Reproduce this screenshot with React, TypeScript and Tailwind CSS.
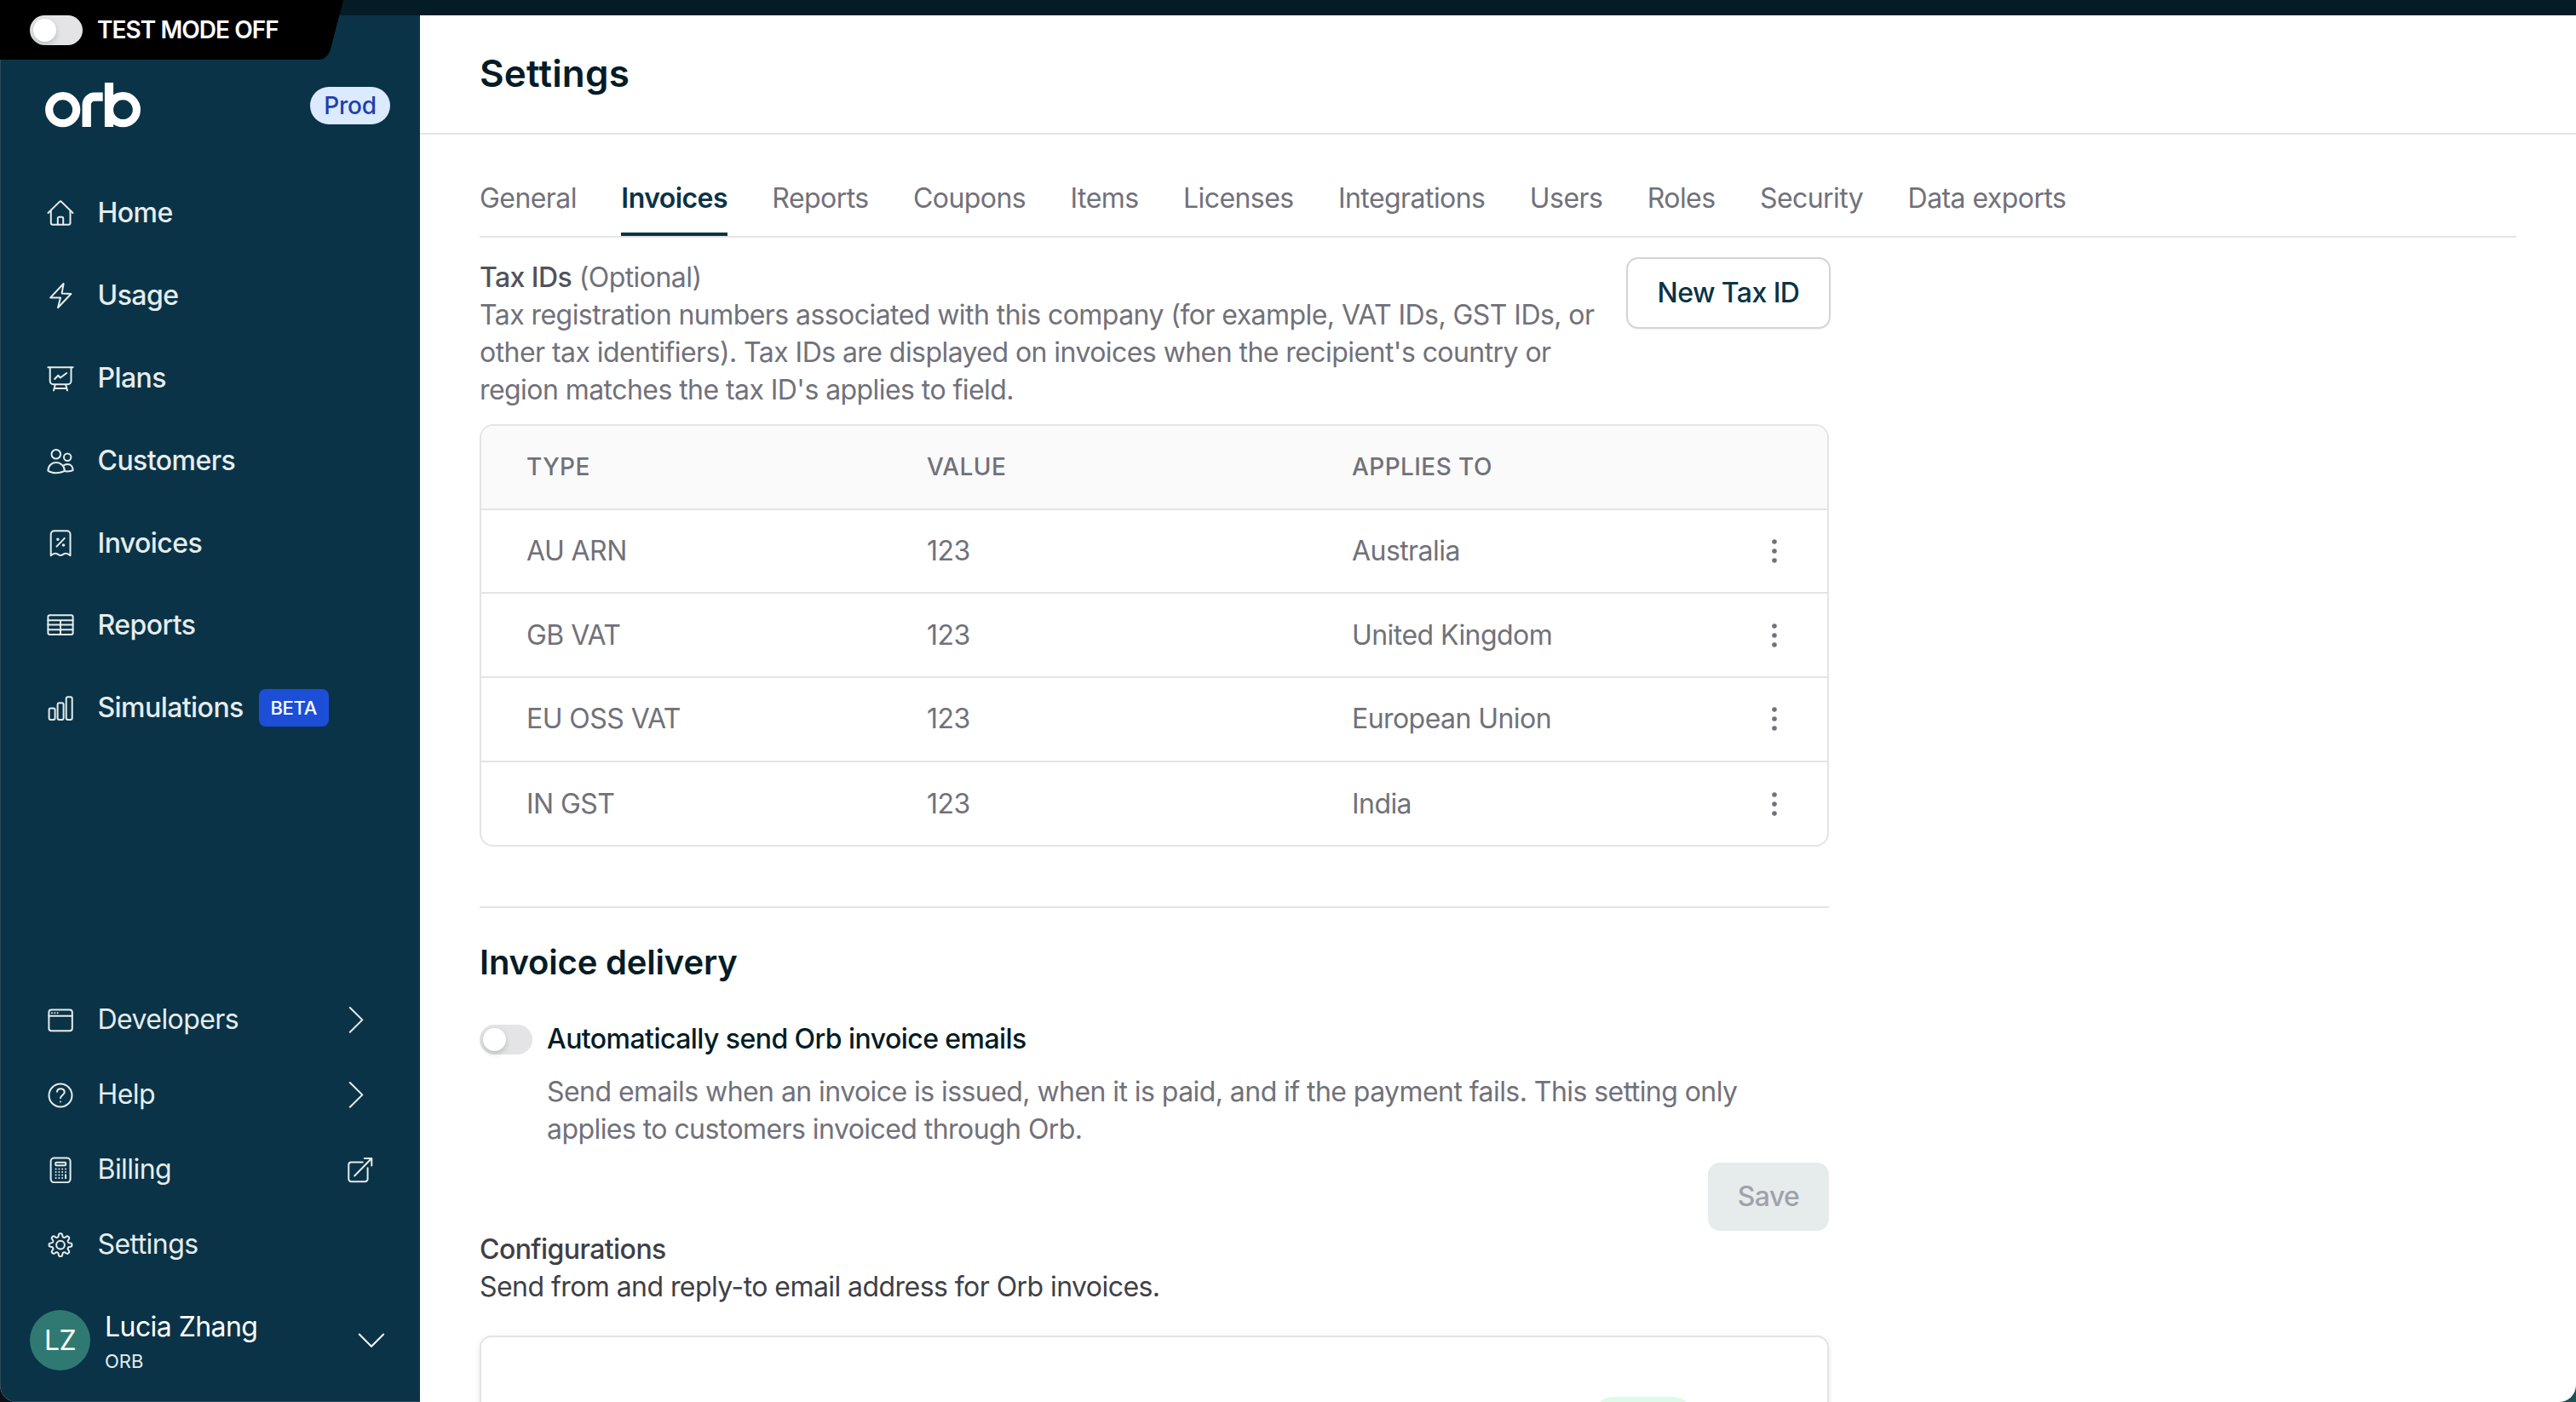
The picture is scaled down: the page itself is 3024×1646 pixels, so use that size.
import React from 'react'
import clsx from 'clsx'

type IconProps = {
  children: React.ReactNode
  className?: string
}

const Icon = ({ children, className }: IconProps) => (
  <svg
    viewBox="0 0 32 32"
    className={clsx("size-8 shrink-0", className)}
    fill="none"
    stroke="currentColor"
    strokeWidth={2}
    strokeLinecap="round"
    strokeLinejoin="round"
  >
    {children}
  </svg>
)

const HomeIcon = () => (
  <Icon>
    <path d="M1.5 16 L14.6 3.1 a2 2 0 0 1 2.8 0 L30.5 16" />
    <path d="M4.8 13.5 V27.8 a2 2 0 0 0 2 2 H25.5 a2 2 0 0 0 2 -2 V13.5" />
    <path d="M12.8 29.5 V22.5 a1.7 1.7 0 0 1 1.7 -1.7 H17.5 a1.7 1.7 0 0 1 1.7 1.7 V29.5" />
  </Icon>
)

const UsageIcon = () => (
  <Icon>
    <path d="M19.6 2 L4.2 18.4 H16 L13 30.3 L28.4 14 L17.6 13.4 Z" />
  </Icon>
)

const PlansIcon = () => (
  <Icon>
    <path d="M1.4 3.3 H30.6" />
    <path d="M3.7 3.5 V19.3 a4 4 0 0 0 4 4 H24.5 a4 4 0 0 0 4 -4 V3.5" />
    <path d="M9.8 23.8 L8 30.4 M22.2 23.8 L24 30.4 M8.8 28 H23.2" />
    <path d="M9.2 17 L13.3 12.8 L15.9 15.5 L23.2 10" />
  </Icon>
)

const CustomersIcon = () => (
  <Icon>
    <circle cx="10.8" cy="8.3" r="5.3" />
    <circle cx="24.2" cy="11.7" r="4.2" />
    <path d="M1.4 27.6 C1.4 22.2 5.6 18 10.9 18 S20.8 22.2 20.8 27.6 C18 29.6 14 30.2 10.9 30.2 S4 29.6 1.4 27.6 Z" />
    <path d="M19 22 C20.5 20.6 22.5 20 24.3 20 C28 20 30.6 23 30.6 27.2 C28.5 28.4 25.5 28.6 21.5 28.3" />
  </Icon>
)

const InvoicesIcon = () => (
  <Icon>
    <path d="M4.7 30.3 V5.2 a4 4 0 0 1 4 -4 H23.5 a4 4 0 0 1 4 4 V30.3 C25.5 28.5 23.5 27.6 21.8 27.8 C19.5 28 18.5 29.9 16.1 29.9 S12.7 28 10.4 27.8 C8.7 27.6 6.7 28.5 4.7 30.3 Z" />
    <path d="M20.8 9.9 L11.5 19.6" />
    <circle cx="12.9" cy="11.3" r="0.8" />
    <circle cx="19.5" cy="18" r="0.8" />
  </Icon>
)

const ReportsIcon = () => (
  <Icon>
    <rect x="1.4" y="4.2" width="29.2" height="22.8" rx="2" />
    <path d="M1.4 10.2 H30.6 M1.4 15.4 H30.6 M1.4 21.2 H30.6 M16 10.2 V27" />
  </Icon>
)

const SimulationsIcon = () => (
  <Icon>
    <rect x="2.6" y="16.6" width="7" height="13.4" rx="2" />
    <rect x="12.6" y="10.3" width="7" height="19.7" rx="2" />
    <rect x="22.7" y="3.2" width="7" height="26.8" rx="2" />
  </Icon>
)

const DevelopersIcon = () => (
  <Icon>
    <rect x="2.4" y="4.5" width="27.4" height="24.8" rx="3" />
    <path d="M2.4 11.7 H29.8" />
    <path d="M6 8.2 h.01 M9.3 8.2 h.01 M12.6 8.2 h.01" />
  </Icon>
)

const HelpIcon = () => (
  <Icon>
    <circle cx="16" cy="17" r="13.5" />
    <path d="M12 12.7 C12.2 10.6 13.9 9.2 16.1 9.2 c2.6 0 4.6 1.6 4.6 4.1 c0 3.5 -4.6 3.4 -4.7 7" />
    <path d="M16 24.4 h.01" />
  </Icon>
)

const BillingIcon = () => (
  <Icon>
    <rect x="4.6" y="2.5" width="23" height="28.8" rx="4" />
    <rect x="10.2" y="7.7" width="12" height="3.6" rx="1" />
    {[15.6, 19, 22.5, 26].map((y) => (
      <path key={y} d={`M10.6 ${y} h.01 M14.4 ${y} h.01 M18.2 ${y} h.01 M22 ${y} h.01`} />
    ))}
    <path d="M22 22.5 V26" />
  </Icon>
)

// eight rounded teeth, sampled round the circle
const gearPoints = Array.from({ length: 160 }, (_, i) => {
  const a = (i / 160) * Math.PI * 2
  const r = 11.5 + 2.05 * Math.tanh(1.8 * Math.cos(a * 8))
  return `${(16 + r * Math.cos(a)).toFixed(2)},${(16.6 + r * Math.sin(a)).toFixed(2)}`
}).join(' ')

const SettingsIcon = () => (
  <Icon>
    <polygon points={gearPoints} />
    <circle cx="16" cy="16.6" r="4.9" />
  </Icon>
)

const ChevronRight = () => (
  <Icon>
    <path d="M3.8 2 L18.3 16.4 L3.8 30.8" />
  </Icon>
)

const ChevronDown = () => (
  <Icon>
    <path d="M1.8 8.5 L16 22.8 L30.2 8.5" />
  </Icon>
)

const ExternalIcon = () => (
  <Icon>
    <path d="M18.8 7.5 H5.3 a3 3 0 0 0 -3 3 V27.2 a3 3 0 0 0 3 3 H21.6 a3 3 0 0 0 3 -3 V14.2" />
    <path d="M9.2 23.5 L29.2 3 M20.8 2.9 H29.3 V11.5" />
  </Icon>
)

const OrbLogo = () => (
  <svg viewBox="0 0 112 53" className="w-[112px] h-[53px]" fill="none" stroke="#fff">
    <circle cx="20.7" cy="31.7" r="16" strokeWidth="9.2" />
    <path d="M48.7 52 V26 A9.3 9.3 0 0 1 58 16.7 H67.7" strokeWidth="10.3" />
    <path d="M75 0 V52" strokeWidth="10.2" />
    <circle cx="91.4" cy="31.7" r="16" strokeWidth="9.2" />
  </svg>
)

const Toggle = () => (
  <span className="flex items-center w-[62px] h-[35px] shrink-0 rounded-full bg-[#e4e4e7] px-1">
    <span className="size-[27px] rounded-full bg-white shadow-[0_3px_6px_rgba(0,35,11,0.2)]" />
  </span>
)

const mainNav = [
  { label: 'Home', icon: <HomeIcon /> },
  { label: 'Usage', icon: <UsageIcon /> },
  { label: 'Plans', icon: <PlansIcon /> },
  { label: 'Customers', icon: <CustomersIcon /> },
  { label: 'Invoices', icon: <InvoicesIcon /> },
  { label: 'Reports', icon: <ReportsIcon /> },
  { label: 'Simulations', icon: <SimulationsIcon />, beta: true },
]

const bottomNav = [
  { label: 'Developers', icon: <DevelopersIcon />, trailing: <ChevronRight /> },
  { label: 'Help', icon: <HelpIcon />, trailing: <ChevronRight /> },
  { label: 'Billing', icon: <BillingIcon />, trailing: <ExternalIcon /> },
  { label: 'Settings', icon: <SettingsIcon /> },
]

const tabs = [
  'General', 'Invoices', 'Reports', 'Coupons', 'Items', 'Licenses',
  'Integrations', 'Users', 'Roles', 'Security', 'Data exports',
]

const taxIds = [
  { type: 'AU ARN', value: '123', appliesTo: 'Australia' },
  { type: 'GB VAT', value: '123', appliesTo: 'United Kingdom' },
  { type: 'EU OSS VAT', value: '123', appliesTo: 'European Union' },
  { type: 'IN GST', value: '123', appliesTo: 'India' },
]

const Sidebar = () => (
  <aside className="flex flex-col w-[493px] shrink-0 bg-[#0a3347] border-l border-b border-[#2b4b5b] text-[#e6ecec]">
    <div className="mt-[79px] h-[53px] pl-[52px] pr-[35px] flex items-center justify-between">
      <OrbLogo />
      <span className="flex items-center justify-center w-[94px] h-11 rounded-full bg-[#dbeafe] text-[#1e40af] text-[28px] font-medium tracking-[-0.3px]">
        Prod
      </span>
    </div>

    <nav className="mt-[52px]">
      {mainNav.map((item) => (
        <a key={item.label} className="flex items-center h-[96.8px] pl-[53.5px] text-[32px] font-medium">
          {item.icon}
          <span className="ml-7">{item.label}</span>
          {item.beta && (
            <span className="ml-[18px] flex items-center justify-center w-[82px] h-11 rounded-lg bg-[#1d4ed8] text-white text-[22px] tracking-[-0.3px]">
              BETA
            </span>
          )}
        </a>
      ))}
    </nav>

    <nav className="mt-auto">
      {bottomNav.map((item) => (
        <a key={item.label} className="flex items-center h-[88px] pl-[53.5px] pr-[54px] text-[32px]">
          {item.icon}
          <span className="ml-7 flex-1">{item.label}</span>
          {item.trailing}
        </a>
      ))}
    </nav>

    <div className="mt-[33px] mb-9 h-[71px] pl-[34px] pr-[41px] flex items-center text-white">
      <span className="flex items-center justify-center size-[71px] rounded-full bg-[#2f7972] text-[32px]">
        LZ
      </span>
      <div className="ml-[17px] pt-1 flex-1 flex flex-col">
        <span className="text-[32px] leading-[44px]">Lucia Zhang</span>
        <span className="text-[22px] leading-9 tracking-normal text-[#e6ecec]">ORB</span>
      </div>
      <ChevronDown />
    </div>
  </aside>
)

const TaxIdTable = () => (
  <div className="w-[1584px] h-[496px] border-2 border-[#e4e4e4] rounded-[16px] overflow-hidden text-[32px]">
    <div className="grid grid-cols-[470px_499px_1fr] items-center h-[98.7px] pl-[53px] bg-[#fafafa] border-b-2 border-[#e4e4e4] text-[28px] font-medium tracking-[0.42px]">
      <span>TYPE</span>
      <span>VALUE</span>
      <span>APPLIES TO</span>
    </div>
    {taxIds.map((row) => (
      <div
        key={row.type}
        className="grid grid-cols-[470px_499px_1fr_auto] items-center h-[98.7px] pl-[53px] pr-[46px] border-b-2 border-[#e4e4e4] last:border-b-0"
      >
        <span>{row.type}</span>
        <span>{row.value}</span>
        <span>{row.appliesTo}</span>
        <svg viewBox="0 0 32 32" className="size-8" fill="currentColor">
          <circle cx="16" cy="5" r="2.8" />
          <circle cx="16" cy="16" r="2.8" />
          <circle cx="16" cy="27" r="2.8" />
        </svg>
      </div>
    ))}
  </div>
)

const App = () => {
  const activeTab = 'Invoices'

  return (
    <div className="w-full h-screen overflow-hidden bg-linear-to-r from-[#0c1214] to-[#1c5156] font-[Inter,sans-serif] leading-normal tracking-[-0.56px]">
      <div className="relative flex flex-col h-full overflow-hidden rounded-b-[20px] bg-white">
        <div className="h-[18px] shrink-0 bg-[#051c26]" />

        <div className="absolute top-0 left-0 h-[70px] w-[404px]">
          <svg viewBox="0 0 404 70" className="absolute inset-0" fill="#000">
            <path d="M0 0 H403 L388.5 56 Q384.5 70 374 70 H0 Z" />
          </svg>
          <div className="relative flex items-center h-[70px] pl-[35px]">
            <Toggle />
            <span className="ml-[17px] text-white text-[28px] font-semibold tracking-[-0.96px]">TEST MODE OFF</span>
          </div>
        </div>

        <div className="flex flex-1 min-h-0">
          <Sidebar />

          <main className="flex-1 min-w-0 overflow-hidden text-[32px] leading-[44px] text-[#71717a]">
            <header className="flex items-center h-[140px] pl-[70px] pb-0.5 border-b-2 border-[#e4e4e4]">
              <h1 className="text-[44px] font-semibold tracking-[0.2px] text-[#051c26]">Settings</h1>
            </header>

            <div className="px-[70px]">
              <div className="flex gap-[52.4px] h-[121px] pt-[53px] border-b-2 border-[#e4e4e4]">
                {tabs.map((tab) => (
                  <span
                    key={tab}
                    className={clsx(
                      "h-[66px] whitespace-nowrap",
                      tab === activeTab && "border-b-4 border-[#0a3347] text-[#0a3347] font-semibold"
                    )}
                  >
                    {tab}
                  </span>
                ))}
              </div>

              <section className="w-[1586px] pt-[23px]">
                <div className="flex justify-between items-start h-[196px]">
                  <div className="w-[1326px] pt-[2px]">
                    <p>
                      <span className="font-medium text-[#52525b]">Tax IDs</span> (Optional)
                    </p>
                    <p>
                      Tax registration numbers associated with this company (for example, VAT IDs, GST IDs, or
                      other tax identifiers). Tax IDs are displayed on invoices when the recipient's country or
                      region matches the tax ID's applies to field.
                    </p>
                  </div>
                  <button className="w-[240px] h-[84px] border-2 border-[#d4d4d8] rounded-[14px] font-medium text-[#0a3347] shadow-[0_1px_2px_rgba(0,0,0,0.05)]">
                    New Tax ID
                  </button>
                </div>
                <TaxIdTable />
              </section>

              <section className="w-[1584px] mt-[70px] border-t-2 border-[#e4e4e4] pt-[42px]">
                <h2 className="text-[40px] font-semibold tracking-[-0.18px] text-[#051c26]">Invoice delivery</h2>
                <div className="flex items-center mt-[46px]">
                  <Toggle />
                  <span className="ml-[17px] font-medium text-[#051c26]">Automatically send Orb invoice emails</span>
                </div>
                <p className="mt-[18px] pl-[79px]">
                  Send emails when an invoice is issued, when it is paid, and if the payment fails. This setting only
                  applies to customers invoiced through Orb.
                </p>
                <div className="flex justify-end mt-[17px]">
                  <button className="w-[142px] h-20 rounded-[14px] bg-[#e6ecec] font-medium text-[#a1a1aa]">
                    Save
                  </button>
                </div>
                <div className="text-[#3f3f46]">
                  <p className="font-medium">Configurations</p>
                  <p>Send from and reply-to email address for Orb invoices.</p>
                </div>
                <div className="flex justify-end mt-[35px] h-[300px] pt-[70px] pr-[158px] border-2 border-[#e4e4e4] rounded-[14px] shadow-[0_2px_6px_rgba(0,0,0,0.1)]">
                  <span className="w-[116px] h-11 rounded-full bg-[#dcfce7]" />
                </div>
              </section>
            </div>
          </main>
        </div>
      </div>
    </div>
  )
}

export default App
